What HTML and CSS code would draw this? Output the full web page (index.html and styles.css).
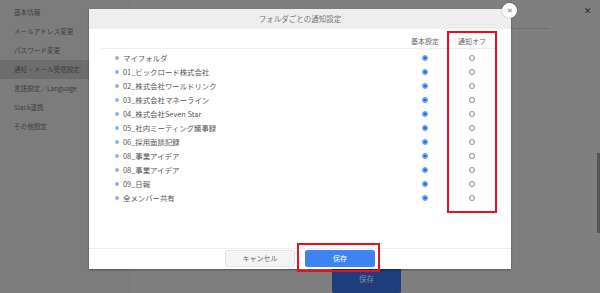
FILE: index.html
```html
<!DOCTYPE html>
<html lang="ja">
<head>
<meta charset="utf-8">
<title>フォルダごとの通知設定</title>
<link rel="stylesheet" href="styles.css">
</head>
<body>
<div class="page">
  <aside class="sidebar">
    <div class="nav-item">基本情報</div>
    <div class="nav-item">メールアドレス変更</div>
    <div class="nav-item">パスワード変更</div>
    <div class="nav-item active">通知・メール受信設定</div>
    <div class="nav-item">言語設定／Language</div>
    <div class="nav-item">Slack連携</div>
    <div class="nav-item">その他設定</div>
  </aside>
  <main class="main">
    <div class="main-head">
      <div class="head-line"></div>
      <div class="head-close">✕</div>
    </div>
    <div class="main-body"></div>
    <div class="main-foot"><button class="page-save">保存</button></div>
  </main>
  <div class="scroll-thumb"></div>
</div>

<div class="modal">
  <div class="modal-head">フォルダごとの通知設定</div>
  <div class="modal-body">
    <div class="table">
      <div class="thead">
        <div class="th-name"></div>
        <div class="th">基本設定</div>
        <div class="th">通知オフ</div>
      </div>
      <div class="tbody">
        <div class="tr"><div class="name"><span class="dot"></span>マイフォルダ</div><div class="cell"><span class="radio on"></span></div><div class="cell"><span class="radio"></span></div></div>
        <div class="tr"><div class="name"><span class="dot"></span>01_ビックロード株式会社</div><div class="cell"><span class="radio on"></span></div><div class="cell"><span class="radio"></span></div></div>
        <div class="tr"><div class="name"><span class="dot"></span>02_株式会社ワールドリンク</div><div class="cell"><span class="radio on"></span></div><div class="cell"><span class="radio"></span></div></div>
        <div class="tr"><div class="name"><span class="dot"></span>03_株式会社マネーライン</div><div class="cell"><span class="radio on"></span></div><div class="cell"><span class="radio"></span></div></div>
        <div class="tr"><div class="name"><span class="dot"></span>04_株式会社Seven Star</div><div class="cell"><span class="radio on"></span></div><div class="cell"><span class="radio"></span></div></div>
        <div class="tr"><div class="name"><span class="dot"></span>05_社内ミーティング議事録</div><div class="cell"><span class="radio on"></span></div><div class="cell"><span class="radio"></span></div></div>
        <div class="tr"><div class="name"><span class="dot"></span>06_採用面談記録</div><div class="cell"><span class="radio on"></span></div><div class="cell"><span class="radio"></span></div></div>
        <div class="tr"><div class="name"><span class="dot"></span>08_事業アイデア</div><div class="cell"><span class="radio on"></span></div><div class="cell"><span class="radio"></span></div></div>
        <div class="tr"><div class="name"><span class="dot"></span>08_事業アイデア</div><div class="cell"><span class="radio on"></span></div><div class="cell"><span class="radio"></span></div></div>
        <div class="tr"><div class="name"><span class="dot"></span>09_日報</div><div class="cell"><span class="radio on"></span></div><div class="cell"><span class="radio"></span></div></div>
        <div class="tr"><div class="name"><span class="dot"></span>全メンバー共有</div><div class="cell"><span class="radio on"></span></div><div class="cell"><span class="radio"></span></div></div>
      </div>
    </div>
  </div>
  <div class="modal-foot">
    <button class="btn btn-cancel">キャンセル</button>
    <button class="btn btn-save">保存</button>
  </div>
  <div class="modal-close">✕</div>
  <div class="mark mark-col"></div>
  <div class="mark mark-save"></div>
</div>
</body>
</html>
```

FILE: styles.css
```css
* { box-sizing: border-box; }

html, body {
  margin: 0;
  padding: 0;
}

body {
  width: 600px;
  height: 293px;
  overflow: hidden;
  position: relative;
  background: #7f7f7f;
  font-family: "Noto Sans CJK JP", "Liberation Sans", sans-serif;
  color: #444;
}

.page {
  display: flex;
  width: 600px;
  height: 293px;
}

.sidebar {
  width: 131px;
  flex: none;
  background: #7c7c7c;
  padding-top: 3px;
}

.nav-item {
  height: 19px;
  line-height: 19px;
  padding-left: 14px;
  font-size: 6.6px;
  color: #3f3f3f;
  white-space: nowrap;
}

.nav-item.active {
  background: #6d6d6d;
}

.main {
  flex: 1;
  display: flex;
  flex-direction: column;
}

.main-head {
  display: flex;
  height: 30px;
}

.head-line {
  flex: 1;
  border-bottom: 1px solid #6e6e6e;
}

.head-close {
  width: 51px;
  display: flex;
  justify-content: flex-end;
  padding: 4px 8px 0 0;
  font-size: 9px;
  line-height: 14px;
  color: #2a2a2a;
}

.main-body {
  height: 240px;
}

.main-foot {
  padding-left: 201px;
}

.page-save {
  width: 69px;
  height: 26px;
  border: 0;
  border-radius: 2px;
  background: #1d3d7b;
  color: #7f8ba6;
  font-family: inherit;
  font-size: 7.5px;
  padding: 0 0 3px;
}

.scroll-thumb {
  position: absolute;
  right: 0;
  top: 153px;
  width: 3px;
  height: 80px;
  background: #555;
}

/* modal */
.modal {
  position: absolute;
  left: 89px;
  top: 9px;
  width: 422px;
  height: 260px;
  background: #fff;
  box-shadow: 0 1px 2px rgba(0, 0, 0, 0.35);
  display: flex;
  flex-direction: column;
}

.modal-head {
  height: 20px;
  line-height: 20px;
  background: #eeeeee;
  text-align: center;
  font-size: 7.5px;
  color: #777;
}

.modal-body {
  flex: 1;
  padding: 0 14px 0 12px;
}

.table {
  display: flex;
  flex-direction: column;
}

.thead,
.tr {
  display: grid;
  grid-template-columns: 1fr 44px 50px;
}

.thead {
  height: 20px;
  border-bottom: 1px solid #eee;
  align-items: end;
  padding-bottom: 2px;
}

.th {
  text-align: center;
  font-size: 7px;
  line-height: 10px;
  color: #666;
}

.tbody {
  padding-top: 2px;
}

.tr {
  height: 14px;
  align-items: center;
}

.name {
  display: flex;
  align-items: center;
  padding-left: 14px;
  font-size: 7.4px;
  line-height: 14px;
  color: #555;
  white-space: nowrap;
}

.dot {
  width: 4px;
  height: 4px;
  border-radius: 50%;
  background: #8fb3f5;
  margin-right: 4px;
  flex: none;
}

.cell {
  display: flex;
  justify-content: center;
  align-items: center;
}

.radio {
  width: 6.5px;
  height: 6.5px;
  border-radius: 50%;
  border: 0.8px solid #8a8a8a;
  background: #fff;
}

.radio.on {
  border: 1px solid #5b9bf5;
  background: radial-gradient(circle, #1a6fe8 0 45%, #5b9bf5 55%);
}

.modal-foot {
  height: 21px;
  border-top: 1px solid #eee;
  display: flex;
  justify-content: center;
  gap: 10px;
  padding-top: 1px;
}

.btn {
  width: 70px;
  height: 17px;
  border-radius: 2px;
  font-family: inherit;
  font-size: 7px;
  padding: 0;
  line-height: 15px;
}

.btn-cancel {
  background: #f5f5f5;
  border: 1px solid #e2e2e2;
  color: #666;
}

.btn-save {
  background: #3d84f2;
  border: 1px solid #3d84f2;
  color: #fff;
}

.modal-close {
  position: absolute;
  left: 413px;
  top: -6px;
  width: 15px;
  height: 15px;
  border-radius: 50%;
  background: #fff;
  box-shadow: 0 0 2px rgba(0, 0, 0, 0.3);
  color: #777;
  font-size: 7px;
  line-height: 15px;
  text-align: center;
}

.mark {
  position: absolute;
  border: 2px solid #e8101a;
}

.mark-col {
  left: 358px;
  top: 22px;
  width: 50px;
  height: 182px;
}

.mark-save {
  left: 208px;
  top: 234px;
  width: 83px;
  height: 29px;
}
```
